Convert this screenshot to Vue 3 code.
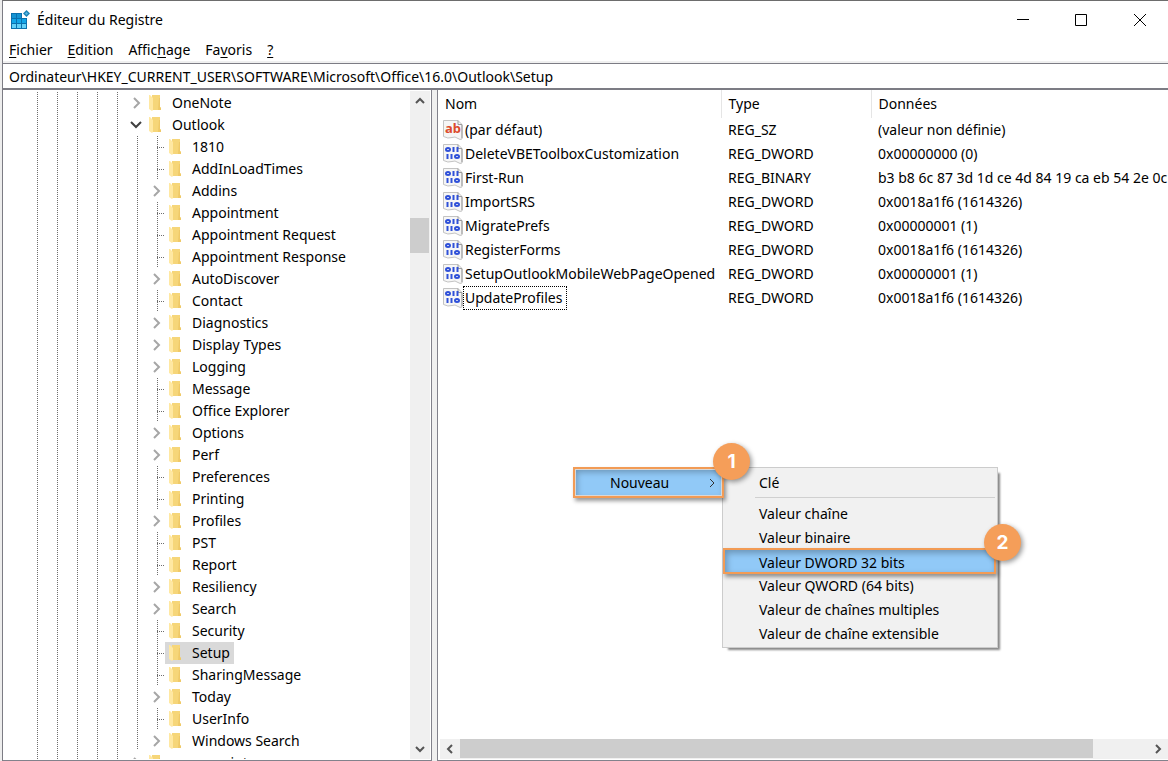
<script setup>
import { ref } from 'vue'

const menus = [
  { before: '', key: 'F', after: 'ichier' },
  { before: '', key: 'E', after: 'dition' },
  { before: 'Affic', key: 'h', after: 'age' },
  { before: 'Fa', key: 'v', after: 'oris' },
  { before: '', key: '?', after: '' },
]
const path = ref('Ordinateur\\HKEY_CURRENT_USER\\SOFTWARE\\Microsoft\\Office\\16.0\\Outlook\\Setup')

const expandable = ['Addins', 'AutoDiscover', 'Diagnostics', 'Display Types', 'Logging', 'Options', 'Perf', 'Profiles', 'Resiliency', 'Search', 'Today', 'Windows Search']
const children = [
  '1810', 'AddInLoadTimes', 'Addins', 'Appointment', 'Appointment Request', 'Appointment Response',
  'AutoDiscover', 'Contact', 'Diagnostics', 'Display Types', 'Logging', 'Message', 'Office Explorer',
  'Options', 'Perf', 'Preferences', 'Printing', 'Profiles', 'PST', 'Report', 'Resiliency', 'Search',
  'Security', 'Setup', 'SharingMessage', 'Today', 'UserInfo', 'Windows Search',
]
const nodes = [
  { name: 'OneNote', depth: 0, toggle: 'closed' },
  { name: 'Outlook', depth: 0, toggle: 'open' },
  ...children.map((name) => ({ name, depth: 1, toggle: expandable.includes(name) ? 'closed' : '' })),
  { name: 'powerpoint', depth: 0, toggle: 'closed' },
]

const values = [
  { name: '(par défaut)', type: 'REG_SZ', data: '(valeur non définie)' },
  { name: 'DeleteVBEToolboxCustomization', type: 'REG_DWORD', data: '0x00000000 (0)' },
  { name: 'First-Run', type: 'REG_BINARY', data: 'b3 b8 6c 87 3d 1d ce 4d 84 19 ca eb 54 2e 0c' },
  { name: 'ImportSRS', type: 'REG_DWORD', data: '0x0018a1f6 (1614326)' },
  { name: 'MigratePrefs', type: 'REG_DWORD', data: '0x00000001 (1)' },
  { name: 'RegisterForms', type: 'REG_DWORD', data: '0x0018a1f6 (1614326)' },
  { name: 'SetupOutlookMobileWebPageOpened', type: 'REG_DWORD', data: '0x00000001 (1)' },
  { name: 'UpdateProfiles', type: 'REG_DWORD', data: '0x0018a1f6 (1614326)' },
]

const newItems = ['Valeur chaîne', 'Valeur binaire', 'Valeur DWORD 32 bits', 'Valeur QWORD (64 bits)', 'Valeur de chaînes multiples', 'Valeur de chaîne extensible']
</script>

<template>
  <div class="window">
    <header class="titlebar">
      <svg class="app-icon" width="20" height="20" viewBox="0 0 20 20" aria-hidden="true">
        <path d="M0 3H11V8H16V19H0Z" fill="#0a70ae" />
        <path d="M1 4H5V8H1ZM6 4H10V8H6Z" fill="#1593d2" />
        <path d="M1 9H5V13H1ZM6 9H10V13H6ZM11 9H15V13H11Z" fill="#12a5e8" />
        <path d="M1 14H5V18H1ZM6 14H10V18H6ZM11 14H15V18H11Z" fill="#62d0f8" />
        <path d="M15.500 0L19 3.500L15.500 7L12 3.500Z" fill="#1c83b8" />
        <path d="M15.500 2L17 3.500L15.500 5L14 3.500Z" fill="#5abbe4" />
      </svg>
      <h1>Éditeur du Registre</h1>
      <div class="controls">
        <button type="button" aria-label="Réduire"><svg width="12" height="12" viewBox="0 0 12 12"><path d="M0 5.500H12" /></svg></button>
        <button type="button" aria-label="Agrandir"><svg width="12" height="12" viewBox="0 0 12 12"><path d="M.5 .5H11.500V11.500H.5Z" /></svg></button>
        <button type="button" aria-label="Fermer"><svg width="14" height="12" viewBox="0 0 14 12"><path d="M2 0L14 12M14 0L2 12" /></svg></button>
      </div>
    </header>

    <nav class="menubar">
      <button v-for="m in menus" :key="m.key" type="button">{{ m.before }}<u>{{ m.key }}</u>{{ m.after }}</button>
    </nav>

    <input v-model="path" class="address" type="text" aria-label="Adresse" spellcheck="false" />

    <main class="panes">
      <section class="tree-pane">
        <ul class="tree">
          <li v-for="n in nodes" :key="n.name" :class="['node', { selected: n.name === 'Setup' }]">
            <span v-for="g in 5" :key="g" class="guide"></span>
            <span v-if="n.depth" :class="['guide', { gone: n.name === 'Windows Search' }]"></span>
            <span :class="['branch', n.toggle || 'leaf']">
              <button v-if="n.toggle" type="button" :aria-label="'Développer ' + n.name">
                <svg v-if="n.toggle === 'closed'" width="12" height="12" viewBox="0 0 12 12"><path d="M4 1L9 6L4 11" stroke="#a6a6a6" /></svg>
                <svg v-else width="12" height="12" viewBox="0 0 12 12"><path d="M1 3L6 8L11 3" stroke="#404040" /></svg>
              </button>
            </span>
            <a href="#" class="key">
              <svg width="12" height="18" viewBox="0 0 12 18" aria-hidden="true">
                <path d="M3 1H11V13L12 14V16H3Z" fill="#f6d679" />
                <path d="M10 4H11V13L12 14V16H9Z" fill="#efc968" />
                <path d="M0 1H1L4 4V16L3 17L0 15Z" fill="#ffe8a2" />
              </svg>
              <span>{{ n.name }}</span>
            </a>
          </li>
        </ul>
        <div class="vbar">
          <button type="button" aria-label="Défiler vers le haut"><svg width="12" height="12" viewBox="0 0 12 12"><path d="M2 8L6 4L10 8" /></svg></button>
          <div class="track"><div class="thumb"></div></div>
          <button type="button" aria-label="Défiler vers le bas"><svg width="12" height="12" viewBox="0 0 12 12"><path d="M2 4L6 8L10 4" /></svg></button>
        </div>
      </section>

      <section class="list-pane">
        <div class="list">
          <table>
            <colgroup><col class="c-name" /><col class="c-type" /><col /></colgroup>
            <thead><tr><th>Nom</th><th>Type</th><th>Données</th></tr></thead>
            <tbody>
              <tr v-for="(v, i) in values" :key="v.name">
                <td>
                  <div class="value">
                    <svg width="20" height="20" viewBox="0 0 20 20" aria-hidden="true">
                      <path d="M.5 .5H15L19 4.500V19Q17 20 15 18.500Q12 16 9 17.500Q5 19 .5 16.500Z" fill="#f6f6f6" stroke="#c3c3c3" />
                      <path d="M15 .5V4.500H19M19 5V18" fill="none" stroke="#9c9c9c" />
                      <text v-if="i === 0" x="2" y="13" class="ab">ab</text>
                      <g v-else fill="none" stroke="#2f50d8" stroke-width="2">
                        <ellipse cx="5" cy="5.500" rx="2" ry="1.500" /><path d="M10.500 3V8M14.500 3V8" />
                        <path d="M4.500 10V15M8.500 10V15" /><ellipse cx="14" cy="12.500" rx="2" ry="1.500" />
                      </g>
                    </svg>
                    <span :class="{ focused: v.name === 'UpdateProfiles' }">{{ v.name }}</span>
                  </div>
                </td>
                <td>{{ v.type }}</td>
                <td>{{ v.data }}</td>
              </tr>
            </tbody>
          </table>
        </div>
        <div class="hbar">
          <button type="button" aria-label="Défiler vers la gauche"><svg width="12" height="12" viewBox="0 0 12 12"><path d="M8 2L4 6L8 10" /></svg></button>
          <div class="track"><div class="thumb"></div></div>
          <button type="button" aria-label="Défiler vers la droite"><svg width="12" height="12" viewBox="0 0 12 12"><path d="M4 2L8 6L4 10" /></svg></button>
        </div>

        <div class="submenu">
          <button type="button">Clé</button>
          <hr />
          <button v-for="t in newItems" :key="t" type="button" :class="{ marked: t.includes('DWORD') }">{{ t }}</button>
          <span class="badge two">2</span>
        </div>
        <div class="context marked">
          <button type="button">Nouveau
            <svg width="12" height="12" viewBox="0 0 12 12"><path d="M5 2L9 6L5 10" /></svg>
          </button>
          <span class="badge one">1</span>
        </div>
      </section>
    </main>
  </div>
</template>

<style>
html,
body,
#app {
  height: 100%;
}
body {
  margin: 0;
  overflow: hidden;
  background: #ededed;
}
</style>

<style scoped>
.window {
  box-sizing: border-box;
  height: 100vh;
  display: flex;
  flex-direction: column;
  margin-left: 2px;
  border-top: 1px solid #6d6d6d;
  border-left: 1px solid #7c7c84;
  background: #fff;
  color: #000;
  font: 14px/22px "Noto Sans", "Open Sans", sans-serif;
}
button,
input {
  font: inherit;
  color: inherit;
}
button {
  padding: 0;
  border: 0;
  background: none;
}
svg {
  display: block;
  flex: none;
}
.titlebar {
  display: flex;
  align-items: center;
  height: 37px;
  padding-left: 8px;
}
h1 {
  flex: 1;
  margin: 0 0 0 6px;
  font-size: 14px;
  font-weight: 400;
}
.controls {
  display: flex;
}
.controls button {
  width: 58px;
  height: 36px;
  display: grid;
  place-items: center;
}
.controls path {
  fill: none;
  stroke: #000;
}
.menubar {
  box-sizing: border-box;
  display: flex;
  gap: 15px;
  height: 25px;
  padding: 1px 0 0 6px;
  border-bottom: 2px solid #f0f0f0;
}
.menubar u {
  text-underline-offset: 2px;
}
.address {
  box-sizing: border-box;
  width: 100%;
  height: 27px;
  padding: 0 6px;
  border: solid #7c7c84;
  border-width: 1px 0 2px;
  border-radius: 0;
  background: #fff;
  outline: 0;
}
.panes {
  flex: 1;
  min-height: 0;
  display: flex;
  background: #f0f0f0;
}
.tree-pane {
  box-sizing: border-box;
  width: 429px;
  display: flex;
  padding: 1px 1px 1px 0;
  border: solid #82828c;
  border-width: 0 1px 1px 0;
  background: #fff;
}
.tree {
  flex: 1;
  margin: 0;
  padding: 1px 0 0;
  list-style: none;
  overflow: hidden;
}
.node {
  display: flex;
  height: 22px;
  padding-left: 24px;
  white-space: nowrap;
}
.guide {
  flex: none;
  width: 20px;
  background: repeating-linear-gradient(#6e6e6e 0 1px, transparent 1px 2px) 10px 0 / 1px 100% no-repeat;
}
.guide.gone {
  background-size: 1px 20px;
}
.branch {
  flex: none;
  width: 18px;
}
.branch.leaf {
  background:
    repeating-linear-gradient(#6e6e6e 0 1px, transparent 1px 2px) 10px 0 / 1px 100% no-repeat,
    repeating-linear-gradient(90deg, #6e6e6e 0 1px, transparent 1px 2px) 10px 11px / 8px 1px no-repeat;
}
.branch button {
  display: block;
  padding: 5px 3px;
}
.branch path {
  fill: none;
  stroke-width: 2;
}
.key {
  display: flex;
  align-items: center;
  gap: 11px;
  padding: 0 4px;
  color: inherit;
  text-decoration: none;
}
.selected .key {
  background: #d9d9d9;
}
.vbar {
  width: 20px;
  display: flex;
  flex-direction: column;
  background: #f0f0f0;
}
.vbar button {
  height: 20px;
  display: grid;
  place-items: center;
}
.track {
  flex: 1;
  display: flex;
}
.vbar .track {
  flex-direction: column;
}
.vbar .thumb {
  height: 35px;
  margin: 107px 1px 0 0;
  background: #cdcdcd;
}
.vbar path,
.hbar path {
  fill: none;
  stroke: #555;
  stroke-width: 2;
}
.list-pane {
  position: relative;
  flex: 1;
  min-width: 0;
  display: flex;
  flex-direction: column;
  margin-left: 5px;
  border: solid #82828c;
  border-width: 0 0 1px 1px;
  background: #fff;
}
.list {
  flex: 1;
  min-height: 0;
  overflow: hidden;
}
table {
  width: 100%;
  table-layout: fixed;
  border-collapse: collapse;
}
.c-name {
  width: 283px;
}
.c-type {
  width: 150px;
}
th,
td {
  height: 24px;
  padding: 0 0 0 7px;
  text-align: left;
  font-weight: 400;
  white-space: nowrap;
}
th {
  height: 28px;
  border-right: 1px solid #e5e5e5;
}
th:last-child {
  border: 0;
}
td:first-child {
  padding-left: 5px;
}
.value {
  display: flex;
  align-items: center;
}
.value span {
  padding: 0 4px 0 1px;
  margin-left: 1px;
}
.value .focused {
  margin-left: 0;
  border: 1px dotted #000;
  line-height: 22px;
}
.ab {
  font: 700 13px "Noto Sans", sans-serif;
  fill: #dc4a2c;
}
.hbar {
  height: 20px;
  display: flex;
  margin: 0 0 1px 2px;
  background: #f0f0f0;
}
.hbar button {
  width: 20px;
  display: grid;
  place-items: center;
}
.hbar .thumb {
  width: 92%;
  height: 19px;
  background: #cdcdcd;
}
.submenu {
  position: absolute;
  left: 284px;
  top: 377px;
  box-sizing: border-box;
  width: 276px;
  padding: 3px 0 1px;
  border: 1px solid #ccc;
  background: #f1f1f1;
  box-shadow: 4px 4px 2px -2px #888;
}
.submenu button {
  box-sizing: border-box;
  display: block;
  width: 100%;
  height: 24px;
  padding-left: 36px;
  text-align: left;
}
.submenu hr {
  height: 1px;
  margin: 2px 2px 4px 32px;
  border: 0;
  background: #d0d0d0;
}
.marked {
  border: 2px solid #f29b55;
  background: #91c9f7;
  box-shadow: 2px 3px 4px #0006, inset 2px 3px 6px #0004;
}
.submenu .marked {
  width: 273px;
  height: 26px;
  margin: -2px 0 0;
  padding: 2px 0 0 34px;
}
.context {
  position: absolute;
  left: 135px;
  top: 377px;
  box-sizing: border-box;
  width: 151px;
  height: 31px;
}
.context button {
  box-sizing: border-box;
  display: flex;
  align-items: center;
  justify-content: space-between;
  width: 100%;
  height: 27px;
  padding: 0 4px 0 34px;
  border: 1px solid #d8d8d8;
}
.context path {
  fill: none;
  stroke: #333;
}
.badge {
  position: absolute;
  width: 37px;
  height: 37px;
  border-radius: 50%;
  background: #f59e59;
  box-shadow: 2px 2px 5px #0006;
  color: #fff;
  font: 700 19px/37px Inter, sans-serif;
  text-align: center;
}
.one {
  right: -28px;
  top: -26px;
}
.two {
  right: -24px;
  top: 56px;
}
</style>
